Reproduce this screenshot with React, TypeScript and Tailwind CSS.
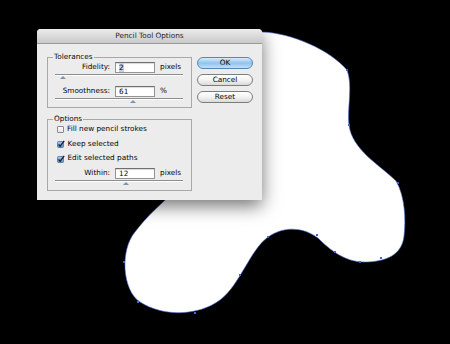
import React from "react";

const blobPath =
  "M 200 40 L 262 32 C 292 33, 330 50, 347 70 C 353 86, 347 108, 349 125 C 352 150, 380 165, 396 181 C 405 196, 406 220, 404 236 C 402 255, 386 262, 364 262 C 345 262, 330 250, 318 238 C 305 228, 285 225, 268 237 C 250 250, 240 285, 220 300 C 200 315, 165 318, 140 302 C 122 290, 120 250, 135 232 C 148 215, 160 205, 178 188 L 150 120 Z";

const anchors: [number, number][] = [
  [347, 70],
  [349, 125],
  [398, 183],
  [381, 258],
  [360, 262],
  [335, 252],
  [317, 235],
  [268, 237],
  [240, 275],
  [195, 313],
  [138, 302],
  [124, 262],
];

function Field({ value, selected }: { value: string; selected?: boolean }) {
  return (
    <div className="flex h-[11px] w-[40px] items-center border border-[#939393] border-t-[#6e6e6e] bg-white pl-[3px] shadow-[inset_0_1px_1px_rgba(0,0,0,0.15)]">
      <span className={selected ? "bg-[#b4d3f5] leading-[9px]" : "leading-[9px]"}>{value}</span>
    </div>
  );
}

function SliderRow({
  label,
  value,
  unit,
  pos,
  selected,
}: {
  label: string;
  value: string;
  unit: string;
  pos: number;
  selected?: boolean;
}) {
  return (
    <div className="flex flex-col">
      <div className="flex h-[11px] items-center">
        <span className="w-[62px] text-right">{label}</span>
        <div className="ml-[5px]">
          <Field value={value} selected={selected} />
        </div>
        <span className="ml-[5px]">{unit}</span>
      </div>
      <div className="relative ml-[7px] mt-[1px] h-[5px] w-[128px]">
        <div className="h-[1px] bg-[#8c8c8c]" />
        <div className="h-[1px] bg-white" />
        <svg className="absolute top-[2px]" style={{ left: pos - 3 }} width="6" height="3">
          <polygon points="3,0 6,3 0,3" fill="#7d95b0" />
        </svg>
      </div>
    </div>
  );
}

function Check({ label, checked }: { label: string; checked?: boolean }) {
  return (
    <div className="flex h-[10px] items-center gap-[3px] pl-[9px]">
      {checked ? (
        <svg width="8" height="8" viewBox="0 0 8 8" className="-ml-[0.5px]">
          <defs>
            <linearGradient id="cb" x1="0" y1="0" x2="0" y2="1">
              <stop offset="0" stopColor="#a9cdf2" />
              <stop offset="1" stopColor="#4f8fd6" />
            </linearGradient>
          </defs>
          <rect x="0.5" y="1.5" width="6" height="6" rx="1" fill="url(#cb)" stroke="#4b6f9b" strokeWidth="0.8" />
          <path d="M1.6 4.4 L3.1 6.3 L7.2 0.8" fill="none" stroke="#1a1a1a" strokeWidth="1.3" />
        </svg>
      ) : (
        <div className="h-[7px] w-[7px] rounded-[1px] border border-[#8a8a8a] bg-gradient-to-b from-white to-[#e4e4e4]" />
      )}
      <span>{label}</span>
    </div>
  );
}

function Group({ label, className, children }: { label: string; className: string; children: React.ReactNode }) {
  return (
    <div className={"relative border border-[#a8a8a8] " + className}>
      <span className="absolute left-[5px] top-[-6px] bg-[#ececec] px-[1px] leading-[10px]">{label}</span>
      {children}
    </div>
  );
}

export default function App() {
  return (
    <div className="relative h-[344px] w-[450px] overflow-hidden bg-black font-['DejaVu_Sans','Liberation_Sans',sans-serif] text-[7.3px] text-[#050505]">
      <svg className="absolute inset-0" width="450" height="344">
        <path d={blobPath} fill="#ffffff" stroke="#4f6fd6" strokeWidth="0.6" />
        {anchors.map(([x, y], i) => (
          <rect key={i} x={x - 1} y={y - 1} width="2" height="2" fill="#3f63e0" />
        ))}
      </svg>

      <div className="absolute left-[37px] top-[29px] flex h-[171px] w-[225px] flex-col rounded-t-[4px] bg-[#ececec] shadow-[0_6px_18px_rgba(0,0,0,0.55)]">
        <div className="flex h-[15px] items-center justify-center rounded-t-[4px] border-b border-[#999999] bg-gradient-to-b from-[#ececec] to-[#c9c9c9] leading-none text-[#222222]">
          Pencil Tool Options
        </div>
        <div className="flex flex-1 gap-[5px] pl-[10px] pr-[9px] pt-[13px]">
          <div className="flex w-[145px] flex-col gap-[11px]">
            <Group label="Tolerances" className="flex h-[51px] flex-col gap-[7px] pt-[4px]">
              <SliderRow label="Fidelity:" value="2" unit="pixels" pos={8} selected />
              <SliderRow label="Smoothness:" value="61" unit="%" pos={78} />
            </Group>
            <Group label="Options" className="flex h-[72px] flex-col gap-[4.5px] pt-[4.5px]">
              <Check label="Fill new pencil strokes" />
              <Check label="Keep selected" checked />
              <Check label="Edit selected paths" checked />
              <SliderRow label="Within:" value="12" unit="pixels" pos={71} />
            </Group>
          </div>
          <div className="flex w-[56px] flex-col gap-[5px]">
            <div className="flex h-[12px] items-center justify-center rounded-full border border-[#5a84b6] bg-gradient-to-b from-[#d9ecfd] via-[#8fc3ee] to-[#bfe0fb] leading-none">
              OK
            </div>
            <div className="flex h-[12px] items-center justify-center rounded-full border border-[#7d7d7d] bg-gradient-to-b from-white via-[#f3f3f3] to-[#dadada] leading-none">
              Cancel
            </div>
            <div className="flex h-[12px] items-center justify-center rounded-full border border-[#7d7d7d] bg-gradient-to-b from-white via-[#f3f3f3] to-[#dadada] leading-none">
              Reset
            </div>
          </div>
        </div>
      </div>
    </div>
  );
}
